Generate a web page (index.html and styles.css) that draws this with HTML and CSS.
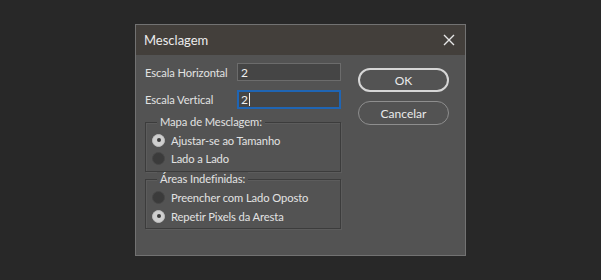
FILE: index.html
```html
<!DOCTYPE html>
<html lang="pt">
<head>
<meta charset="utf-8">
<title>Mesclagem</title>
<link rel="stylesheet" href="styles.css">
</head>
<body>
<div class="dialog">
  <div class="titlebar">
    <span class="title">Mesclagem</span>
    <svg class="close" width="12" height="12" viewBox="0 0 12 12"><path d="M1 1L11 11M11 1L1 11" stroke="#e6e6e6" stroke-width="1.4" fill="none"/></svg>
  </div>
  <div class="content">
    <div class="left">
      <div class="row">
        <span class="label">Escala Horizontal</span>
        <div class="input">2</div>
      </div>
      <div class="row">
        <span class="label">Escala Vertical</span>
        <div class="input focus">2<span class="caret"></span></div>
      </div>
      <div class="group g1">
        <span class="legend">Mapa de Mesclagem:</span>
        <div class="opt"><span class="radio on"></span>Ajustar-se ao Tamanho</div>
        <div class="opt"><span class="radio"></span>Lado a Lado</div>
      </div>
      <div class="group g2">
        <span class="legend">Áreas Indefinidas:</span>
        <div class="opt"><span class="radio"></span>Preencher com Lado Oposto</div>
        <div class="opt"><span class="radio on"></span>Repetir Pixels da Aresta</div>
      </div>
    </div>
    <div class="right">
      <div class="btn primary">OK</div>
      <div class="btn">Cancelar</div>
    </div>
  </div>
</div>
</body>
</html>
```
FILE: styles.css
```css
html, body { margin: 0; padding: 0; }
body {
  background: #282828;
  height: 280px;
  display: flex;
  align-items: center;
  justify-content: center;
  font-family: "Lato", "Noto Sans", sans-serif;
  font-size: 11.2px;
  letter-spacing: -0.1px;
  color: #e2e2e2;
}
.dialog {
  width: 329px;
  height: 230px;
  border: 1px solid #727272;
  background: #535353;
  display: flex;
  flex-direction: column;
}
.titlebar {
  height: 30px;
  background: #433f3b;
  display: flex;
  align-items: center;
  justify-content: space-between;
  padding: 0 10px 0 8px;
  flex: none;
}
.title { font-size: 13px; letter-spacing: 0; color: #ececec; }
.close { display: block; }
.content {
  display: flex;
  padding: 8px 0 0 9px;
  gap: 17px;
}
.left { width: 196px; display: flex; flex-direction: column; }
.row { display: flex; align-items: center; justify-content: space-between; height: 18px; margin-bottom: 9px; }
.row + .row { margin-bottom: 0; }
.label { white-space: nowrap; }
.input {
  box-sizing: border-box;
  width: 104px;
  height: 18px;
  background: #454545;
  border: 1px solid #6c6c6c;
  padding-left: 3px;
  color: #f0f0f0;
  display: flex;
  align-items: center;
  font-size: 12px;
}
.input.focus { border: 2px solid #1f65b4; padding-left: 2px; height: 19px; }
.caret { display: inline-block; width: 1px; height: 13px; background: #f0f0f0; margin-left: 1px; }
.group {
  box-sizing: border-box;
  position: relative;
  height: 50px;
  padding: 8px 0 0 6px;
  border: 1px solid #3c3c3c;
  box-shadow: inset 1px 1px 0 #5c5c5c, 1px 1px 0 #5c5c5c;
}
.g1 { margin-top: 14px; }
.g2 { margin-top: 7px; }
.g2 .opt + .opt { height: 20px; }
.legend {
  position: absolute;
  left: 11px;
  top: -8px;
  padding: 0 3px;
  line-height: 14px;
  background: #535353;
  white-space: nowrap;
}
.opt {
  display: flex;
  align-items: center;
  height: 18px;
  white-space: nowrap;
}
.radio {
  box-sizing: border-box;
  width: 13px;
  height: 13px;
  border-radius: 50%;
  background: #3b3b3b;
  border: 1px solid #474747;
  margin-right: 6px;
  position: relative;
  flex: none;
}
.radio.on { background: #cfcfcf; border-color: #bdbdbd; }
.radio.on::after {
  content: "";
  position: absolute;
  left: 3.5px; top: 3.5px;
  width: 4px; height: 4px;
  border-radius: 50%;
  background: #3a3a3a;
}
.right { display: flex; flex-direction: column; padding-top: 5px; gap: 9px; }
.btn {
  box-sizing: border-box;
  width: 91px;
  height: 24px;
  border-radius: 12px;
  border: 1px solid #8e8e8e;
  display: flex;
  align-items: center;
  justify-content: center;
  color: #eaeaea;
  font-size: 12px;
  letter-spacing: 0;
}
.btn.primary { border: 2px solid #d6d6d6; }
```
